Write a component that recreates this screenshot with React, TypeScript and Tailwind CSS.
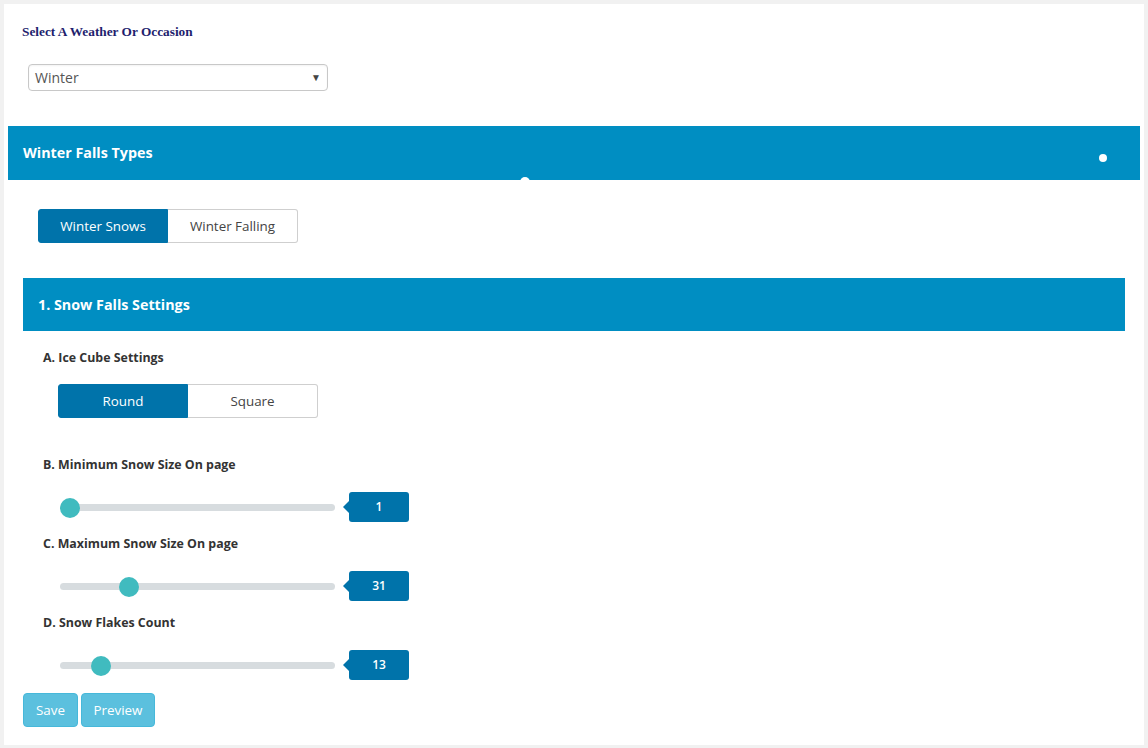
import React from "react";

const sans = { fontFamily: '"Open Sans", "Noto Sans", sans-serif' };

function Segmented({
  items,
  active,
  className,
}: {
  items: { label: string; width: string }[];
  active: number;
  className?: string;
}) {
  return (
    <div className={`flex ${className ?? ""}`}>
      {items.map((it, i) => (
        <div
          key={it.label}
          className={[
            "flex h-[34px] items-center justify-center text-[13.4px]",
            it.width,
            i === 0 ? "rounded-l-[3px]" : "rounded-r-[3px]",
            i === active
              ? "bg-[#0073aa] text-white border border-[#0073aa]"
              : "bg-white text-[#444] border border-[#cfcfcf]",
            i > 0 ? "border-l-0" : "",
          ].join(" ")}
        >
          {it.label}
        </div>
      ))}
    </div>
  );
}

function Slider({ label, value, thumb }: { label: string; value: string; thumb: number }) {
  return (
    <div className="ml-[39px]">
      <div className="text-[12.4px] font-bold leading-[16px] text-[#333]">{label}</div>
      <div className="mt-[19px] flex h-[30px] items-center">
        <div className="relative ml-[17px] mt-[1px] h-[7px] w-[275px] rounded-full bg-[#d7dcdf]">
          <div
            className="absolute top-1/2 h-[20px] w-[20px] -translate-y-1/2 rounded-full bg-[#40bbbf]"
            style={{ left: thumb - 10 }}
          />
        </div>
        <div className="relative ml-[14px] flex h-[30px] w-[60px] items-center justify-center rounded-[3px] bg-[#0073aa] text-[12px] font-semibold text-white">
          <div className="absolute -left-[6px] top-1/2 h-0 w-0 -translate-y-1/2 border-y-[6px] border-r-[6px] border-y-transparent border-r-[#0073aa]" />
          {value}
        </div>
      </div>
    </div>
  );
}

export default function App() {
  return (
    <div className="h-[748px] w-[1148px] bg-[#f1f1f1] p-1" style={sans}>
      <div className="h-[741px] w-[1140px] bg-white">
        <div
          className="pl-[18px] pt-[20px] text-[13.3px] font-bold leading-[16px] text-[#1e1e6e]"
          style={{ fontFamily: '"Liberation Serif", "Times New Roman", serif' }}
        >
          Select A Weather Or Occasion
        </div>

        <div className="ml-[24px] mt-[24px] flex h-[27px] w-[300px] items-center justify-between rounded-[4px] border border-[#c8c8c8] pl-[6px] pr-[6px] text-[14px] text-[#555] shadow-[inset_0_1px_2px_rgba(0,0,0,0.05)]">
          <span>Winter</span>
          <span className="text-[10px] text-[#444]">▼</span>
        </div>

        <div className="relative mx-[4px] mt-[35px] flex h-[54px] items-center bg-[#008ec2] pl-[15px] text-[14.3px] font-bold text-white">
          Winter Falls Types
          <div className="absolute left-[1091px] top-[28px] h-[8px] w-[8px] rounded-full bg-white" />
          <div className="absolute left-[512px] top-[51px] h-[10px] w-[10px] rounded-full bg-white" />
        </div>

        <Segmented
          className="ml-[34px] mt-[29px]"
          active={0}
          items={[
            { label: "Winter Snows", width: "w-[130px]" },
            { label: "Winter Falling", width: "w-[130px]" },
          ]}
        />

        <div className="ml-[19px] mt-[35px] flex h-[53px] w-[1102px] items-center bg-[#008ec2] pl-[15px] text-[14.3px] font-bold text-white">
          1. Snow Falls Settings
        </div>

        <div className="ml-[39px] mt-[19px] text-[12.4px] font-bold leading-[16px] text-[#333]">
          A. Ice Cube Settings
        </div>
        <Segmented
          className="ml-[54px] mt-[18px]"
          active={0}
          items={[
            { label: "Round", width: "w-[130px]" },
            { label: "Square", width: "w-[130px]" },
          ]}
        />

        <div className="mt-[39px]">
          <Slider label="B. Minimum Snow Size On page" value="1" thumb={10} />
        </div>
        <div className="mt-[14px]">
          <Slider label="C. Maximum Snow Size On page" value="31" thumb={69} />
        </div>
        <div className="mt-[14px]">
          <Slider label="D. Snow Flakes Count" value="13" thumb={41} />
        </div>

        <div className="ml-[19px] mt-[13px] flex gap-[3px]">
          <div className="flex h-[34px] w-[55px] items-center justify-center rounded-[4px] border border-[#46b8da] bg-[#5bc0de] text-[13.4px] text-white">
            Save
          </div>
          <div className="flex h-[34px] w-[74px] items-center justify-center rounded-[4px] border border-[#46b8da] bg-[#5bc0de] text-[13.4px] text-white">
            Preview
          </div>
        </div>
      </div>
    </div>
  );
}
